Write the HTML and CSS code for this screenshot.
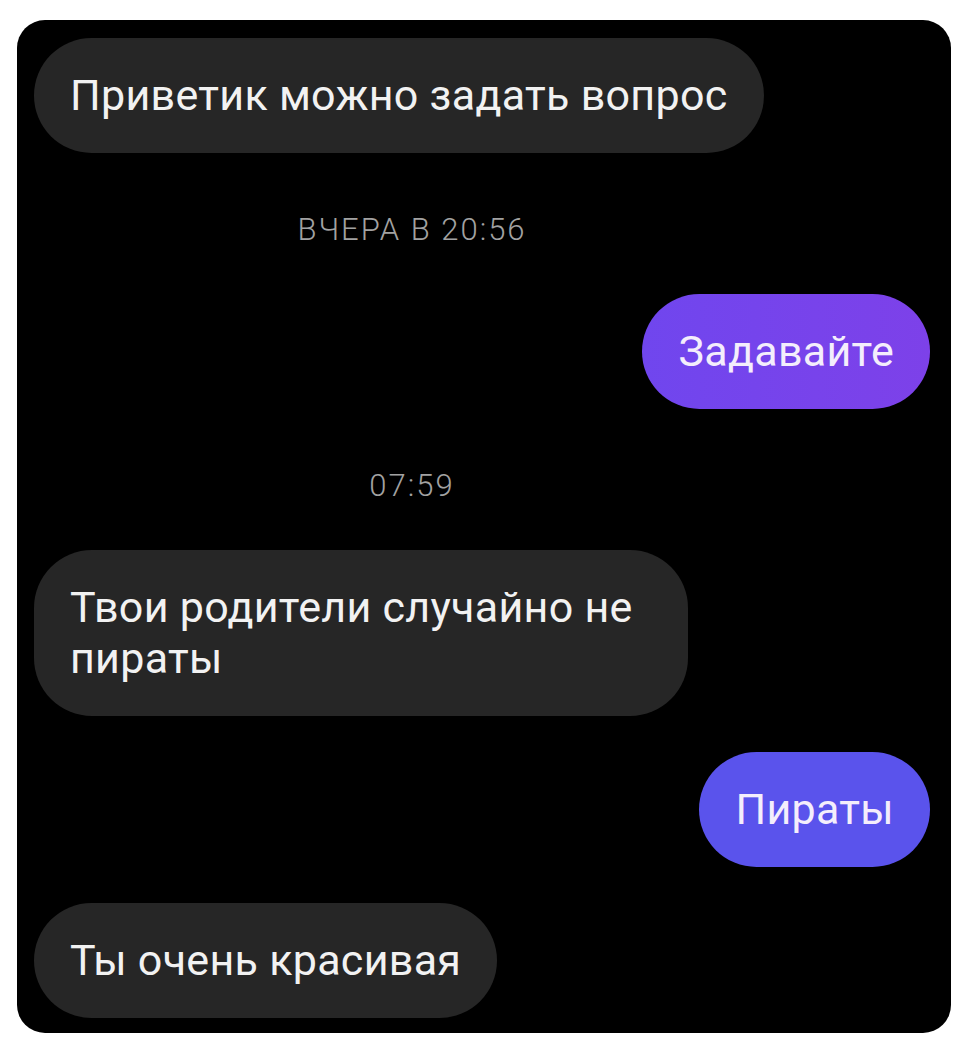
FILE: index.html
```html
<!DOCTYPE html>
<html lang="ru">
<head>
  <meta charset="UTF-8" />
  <meta name="viewport" content="width=device-width, initial-scale=1.0"/>
  <title>Чат</title>
  <link rel="stylesheet" href="styles.css">
</head>
<body>
  <div class="chat">
    <div class="msg in">Приветик можно задать вопрос</div>

    <div class="stamp">ВЧЕРА В 20:56</div>

    <div class="msg out out-top">Задавайте</div>

    <div class="stamp">07:59</div>

    <div class="msg in wide">Твои родители случайно не<br>пираты</div>

    <div class="msg out out-low">Пираты</div>

    <div class="msg in">Ты очень красивая</div>
  </div>
</body>
</html>
```

FILE: styles.css
```css
:root {
  --panel: #000;
  --bubble: #262626;
  --text: #f2f2f2;
  --muted: #a2a2a2;
}

body {
  margin: 0;
  background: #fff;
  font-family: Roboto, "Liberation Sans", sans-serif;
}

.chat {
  margin: 20px 0 0 17px;
  width: 934px;
  height: 1013px;
  box-sizing: border-box;
  padding: 18px 21px 16px 17px;
  background: var(--panel);
  border-radius: 28px;
  display: flex;
  flex-direction: column;
  gap: 36px;
}

.msg {
  color: var(--text);
  font-size: 43px;
  line-height: 51px;
  letter-spacing: 0.3px;
  padding: 32px 36px;
  border-radius: 58px;
}

.in {
  align-self: flex-start;
  background: var(--bubble);
}

.wide {
  width: 654px;
  box-sizing: border-box;
}

.out {
  align-self: flex-end;
  color: #f4eefc;
}

.out-top {
  background: linear-gradient(90deg, #7046ee, #7d41e9);
}

.out-low {
  background: #5a53ec;
}

.stamp {
  color: var(--muted);
  font-size: 31px;
  font-weight: 300;
  letter-spacing: 2px;
  line-height: 40px;
  text-align: center;
  padding: 21px 140px 8px 0;
}
```
